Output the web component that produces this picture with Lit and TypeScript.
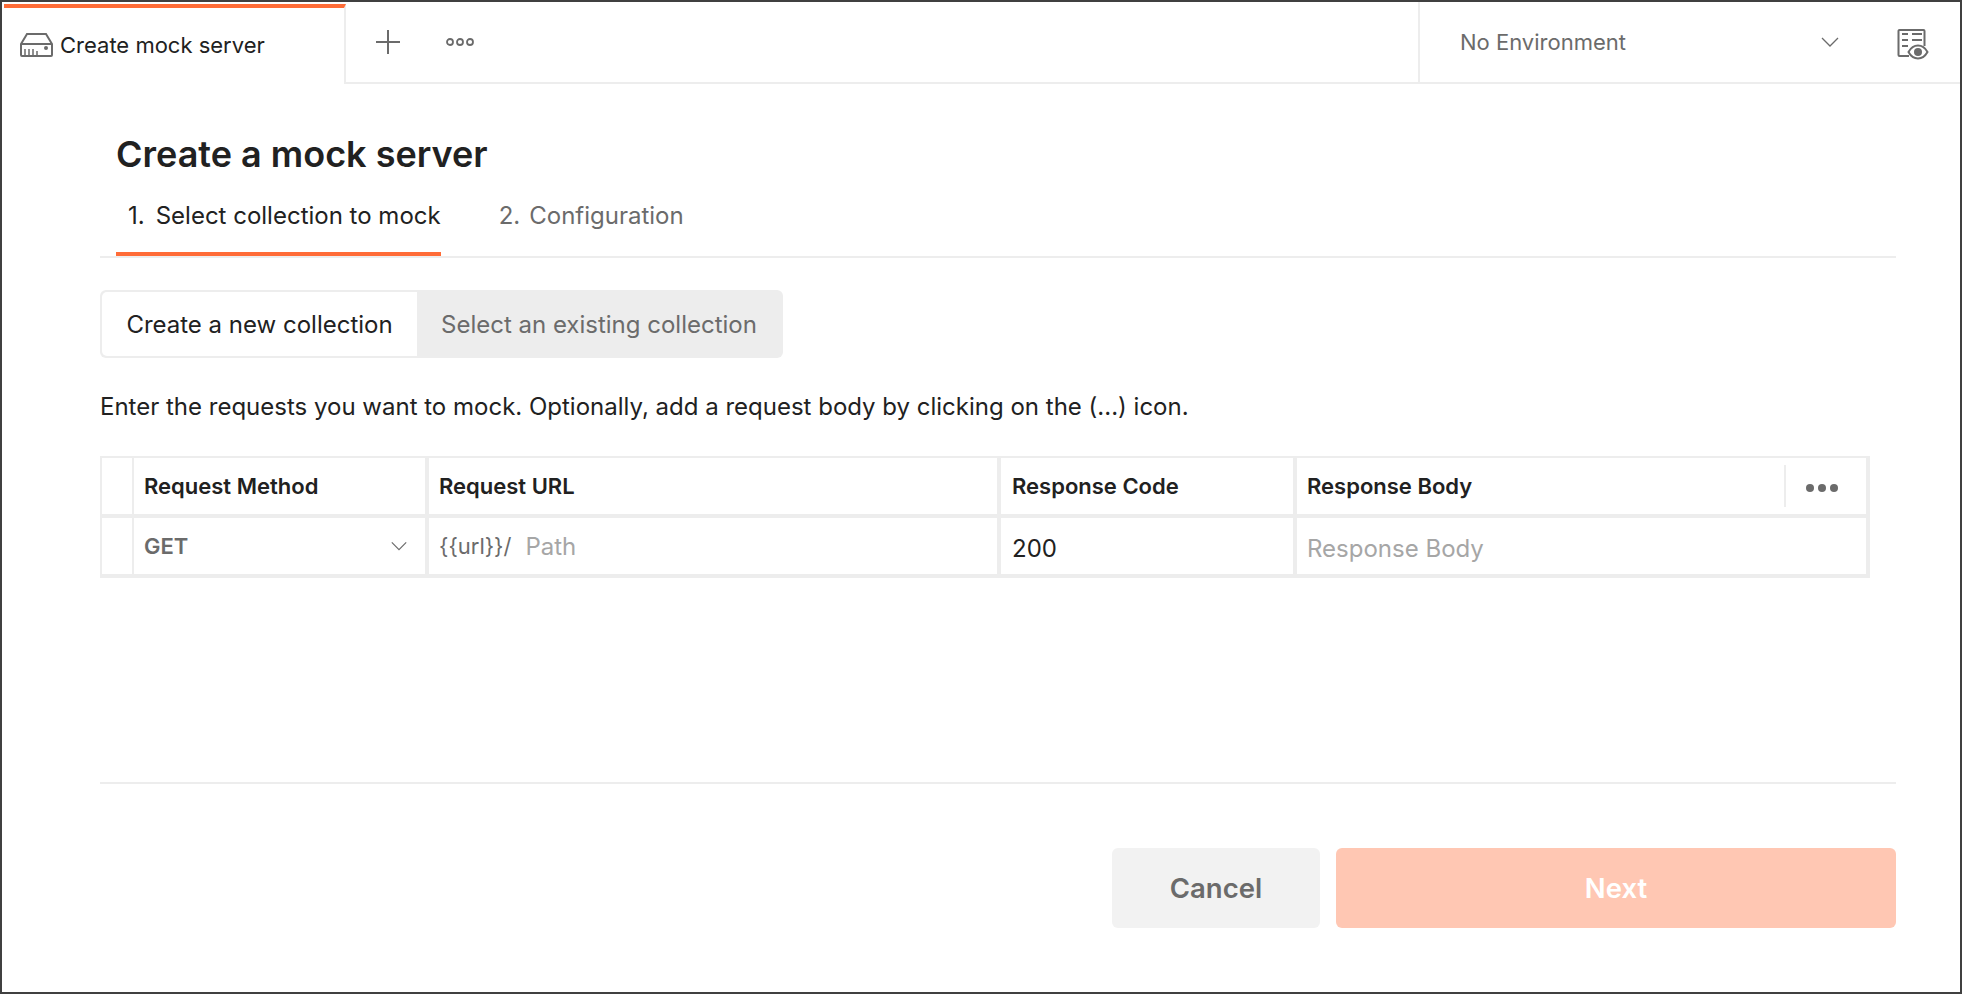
import { LitElement, css, html } from "lit";
import { customElement } from "lit/decorators.js";

const chevron = (size: number) => html`<svg width=${size} height=${size} viewBox="0 0 20 20" fill="none" stroke="#6b6b6b" stroke-width="1.3">
  <path d="M2 6l8 8 8-8" />
</svg>`;

const drawerIcon = html`<svg width="33" height="24" viewBox="0 0 33 24" fill="none" stroke="#6b6b6b" stroke-width="2">
  <path d="M1 11 7 1h19l6 10v11a1 1 0 0 1-1 1H2a1 1 0 0 1-1-1z" />
  <path d="M1 11h31" />
  <path d="M5 16v6M9 16v6M13 16v6M17 18v4" stroke-width="1.5" />
  <circle cx="26" cy="15" r="2" fill="#6b6b6b" stroke="none" />
</svg>`;

const plusIcon = html`<svg width="24" height="24" viewBox="0 0 24 24" fill="none" stroke="#6b6b6b" stroke-width="2">
  <path d="M12 0v24M0 12h24" />
</svg>`;

const ringsIcon = html`<svg width="28" height="10" viewBox="0 0 28 10" fill="none" stroke="#6b6b6b" stroke-width="1.8">
  <circle cx="4" cy="5" r="3" /><circle cx="14" cy="5" r="3" /><circle cx="24" cy="5" r="3" />
</svg>`;

const envIcon = html`<svg class="env-icon" width="33" height="32" viewBox="0 0 33 32" fill="none" stroke="#6b6b6b" stroke-width="2">
  <path d="M12 27H2.500a1 1 0 0 1-1-1V2a1 1 0 0 1 1-1h24a1 1 0 0 1 1 1v15" />
  <path d="M5 5h6M15 5h10M5 11h6M15 11h10M5 17h6" />
  <path d="M11.500 23c2.500-4.500 6-6.500 9.500-6.500s7 2 9.500 6.500c-2.500 4.500-6 6.500-9.500 6.500s-7-2-9.500-6.500z" fill="#fff" />
  <circle cx="21" cy="23" r="4" fill="#6b6b6b" stroke="none" />
</svg>`;

@customElement("app-root")
export class AppRoot extends LitElement {
  static styles = css`
    :host {
      display: block;
      box-sizing: border-box;
      width: 1962px;
      height: 994px;
      border: 2px solid #404040;
      background: #fff;
      font-family: Inter, "Liberation Sans", sans-serif;
      font-size: 22px;
      color: #212121;
      overflow: hidden;
    }

    .topbar {
      display: flex;
      align-items: stretch;
      height: 82px;
    }

    .tab {
      box-sizing: border-box;
      flex: none;
      display: flex;
      align-items: center;
      gap: 7px;
      padding: 0 0 2px 16px;
      border-top: 4px solid #ff6c37;
      margin-top: 2px;
      border-right: 2px solid #ededed;
      margin-left: 2px;
      width: 342px;
    }

    .tab-title {
      font-size: 22px;
      white-space: nowrap;
    }

    .tab-tools {
      flex: 1;
      display: flex;
      align-items: center;
      gap: 46px;
      padding: 0 0 0 30px;
      border-bottom: 2px solid #ededed;
    }

    .env {
      box-sizing: border-box;
      width: 542px;
      flex: none;
      display: flex;
      align-items: center;
      padding: 0 30px 0 40px;
      border-left: 2px solid #ededed;
      border-bottom: 2px solid #ededed;
      color: #6b6b6b;
    }

    .env-name {
      flex: 1;
      font-size: 22px;
      white-space: nowrap;
    }

    .env-chevron {
      display: flex;
      margin-right: 57px;
    }

    .env-icon {
      flex: none;
      margin-top: 6px;
    }

    .page {
      padding: 0 64px 0 98px;
    }

    h1 {
      margin: 0;
      padding: 48px 0 0 16px;
      font-size: 36px;
      line-height: 44px;
      font-weight: 600;
    }

    .steps {
      display: flex;
      gap: 46px;
      padding-left: 16px;
      border-bottom: 2px solid #ededed;
    }

    .step {
      height: 80px;
      box-sizing: border-box;
      padding: 24px 0 0 12px;
      font-size: 24px;
      line-height: 32px;
      color: #6b6b6b;
      white-space: nowrap;
    }

    .step.active {
      color: #212121;
      border-bottom: 4px solid #ff6c37;
    }

    .step span {
      margin-right: 9px;
    }

    .step.active span {
      margin-right: 11px;
    }

    .segment {
      display: inline-flex;
      height: 68px;
      margin-top: 32px;
      box-sizing: border-box;
      background: #ededed;
      border-radius: 6px;
      overflow: hidden;
      font-size: 24px;
      vertical-align: top;
    }

    .seg {
      display: flex;
      align-items: center;
      white-space: nowrap;
      padding: 0 26px 0 24px;
      color: #6b6b6b;
    }

    .seg.active {
      margin: 2px 0 2px 2px;
      padding: 0 24px;
      width: 315px;
      box-sizing: border-box;
      justify-content: center;
      background: #fff;
      border-radius: 5px 0 0 5px;
      color: #212121;
    }

    .hint {
      margin: 0;
      padding-top: 32px;
      font-size: 24px;
      line-height: 34px;
    }

    .grid {
      display: grid;
      grid-template-columns: 32px 295px 572px 296px 1fr;
      grid-template-rows: 60px 56px;
      width: 1770px;
      margin-top: 32px;
      box-sizing: border-box;
      border: 2px solid #ededed;
      border-bottom-width: 4px;
      border-right-width: 4px;
      font-size: 22px;
    }

    .cell {
      box-sizing: border-box;
      display: flex;
      align-items: center;
      padding: 0 10px;
      border-right: 4px solid #ededed;
      white-space: nowrap;
    }

    .cell.head {
      font-weight: 600;
      border-bottom: 4px solid #ededed;
    }

    .cell.last {
      border-right: 0;
    }

    .cell.gutter {
      border-right-width: 2px;
    }

    .cell.value {
      font-size: 24px;
      padding-top: 4px;
    }

    .cell.code {
      padding-left: 11px;
    }

    .method {
      justify-content: space-between;
      font-weight: 600;
      color: #6b6b6b;
      padding-right: 17px;
    }

    .url {
      color: #6b6b6b;
      gap: 14px;
    }

    .url .placeholder {
      font-size: 24px;
    }

    .placeholder {
      color: #a6a6a6;
    }

    .head-actions {
      margin-left: auto;
      box-sizing: border-box;
      display: flex;
      align-items: center;
      width: 82px;
      height: 42px;
      margin-right: -10px;
      padding: 3px 0 0 20px;
      border-left: 2px solid #ededed;
    }

    .dots {
      display: flex;
      gap: 4px;
    }

    .dots i {
      width: 8px;
      height: 8px;
      border-radius: 50%;
      background: #6b6b6b;
    }

    .rule {
      height: 2px;
      background: #ededed;
      margin-top: 204px;
    }

    .actions {
      display: flex;
      justify-content: flex-end;
      gap: 16px;
      padding-top: 64px;
    }

    .btn {
      height: 80px;
      display: flex;
      align-items: center;
      justify-content: center;
      border-radius: 6px;
      font-size: 27.500px;
      font-weight: 600;
    }

    .btn.cancel {
      width: 208px;
      background: #f2f2f2;
      color: #6b6b6b;
    }

    .btn.next {
      width: 560px;
      background: #ffc7b3;
      color: #fff;
    }
  `;

  render() {
    return html`
      <div class="topbar">
        <div class="tab">${drawerIcon}<span class="tab-title">Create mock server</span></div>
        <div class="tab-tools">${plusIcon}${ringsIcon}</div>
        <div class="env">
          <span class="env-name">No Environment</span>
          <span class="env-chevron">${chevron(20)}</span>
          ${envIcon}
        </div>
      </div>
      <div class="page">
        <h1>Create a mock server</h1>
        <div class="steps">
          <div class="step active"><span>1.</span>Select collection to mock</div>
          <div class="step"><span>2.</span>Configuration</div>
        </div>
        <div class="segment">
          <div class="seg active">Create a new collection</div>
          <div class="seg">Select an existing collection</div>
        </div>
        <p class="hint">Enter the requests you want to mock. Optionally, add a request body by clicking on the (...) icon.</p>
        <div class="grid">
          <div class="cell head gutter"></div>
          <div class="cell head">Request Method</div>
          <div class="cell head">Request URL</div>
          <div class="cell head code">Response Code</div>
          <div class="cell head last">
            Response Body
            <div class="head-actions"><div class="dots"><i></i><i></i><i></i></div></div>
          </div>
          <div class="cell gutter"></div>
          <div class="cell method">GET ${chevron(18)}</div>
          <div class="cell url">{{url}}/ <span class="placeholder">Path</span></div>
          <div class="cell value code">200</div>
          <div class="cell last value placeholder">Response Body</div>
        </div>
        <div class="rule"></div>
        <div class="actions">
          <div class="btn cancel">Cancel</div>
          <div class="btn next">Next</div>
        </div>
      </div>
    `;
  }
}

declare global {
  interface HTMLElementTagNameMap {
    "app-root": AppRoot;
  }
}
